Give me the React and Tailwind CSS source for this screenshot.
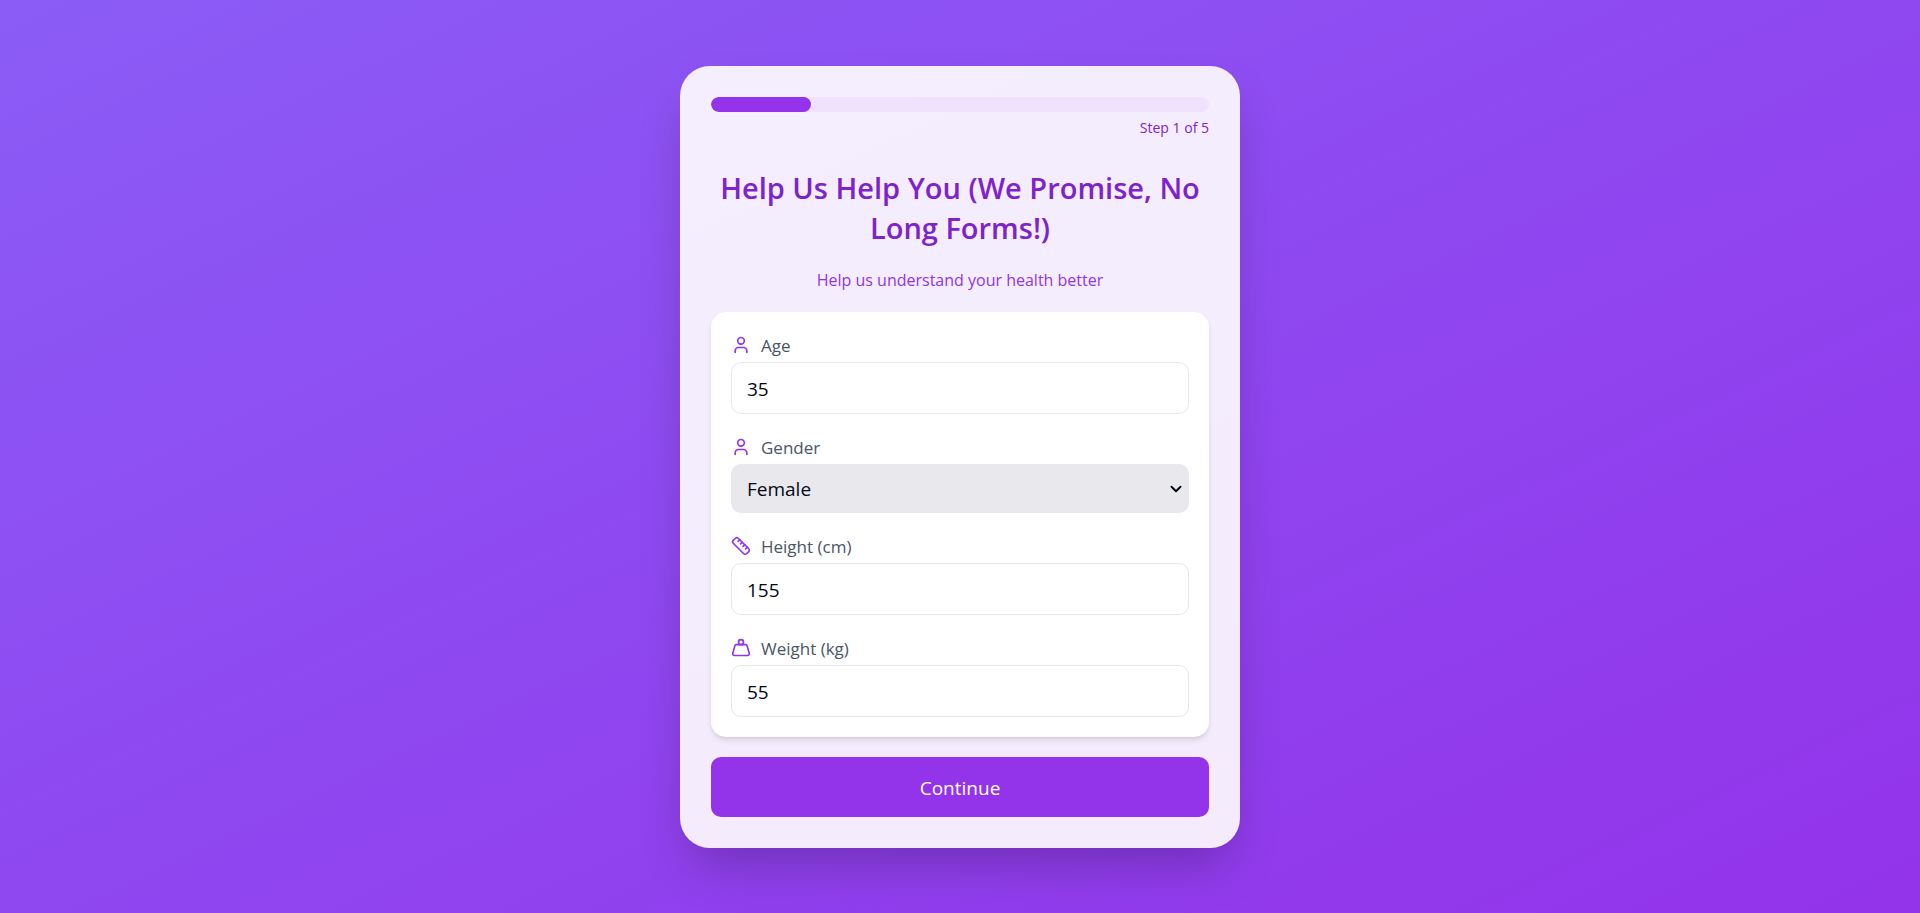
import { ChevronDown, Ruler, User, Weight } from "lucide-react";

const controlClass =
  "block w-full rounded-[10px] pt-[3px] text-[19px] text-[#020817] focus:outline-2 focus:outline-purple-500";

function Field({ id, label, icon: Icon, children }) {
  return (
    <div>
      <label
        htmlFor={id}
        className="mb-1 flex h-[26px] items-center gap-[10px] text-[17px] leading-[26px] text-gray-600"
      >
        <Icon size={20} className="shrink-0" color="#9333ea" aria-hidden="true" />
        <span className="pt-[2px]">{label}</span>
      </label>
      {children}
    </div>
  );
}

function NumberField({ id, label, icon, value }) {
  return (
    <Field id={id} label={label} icon={icon}>
      <input
        id={id}
        type="text"
        inputMode="numeric"
        defaultValue={value}
        className={`${controlClass} h-[52px] border border-[#e5e7eb] bg-white px-[15px]`}
      />
    </Field>
  );
}

export default function App() {
  return (
    <main className="flex min-h-screen items-center justify-center bg-[linear-gradient(to_bottom_right,#8b5cf6,#9333ea)] p-4 font-['Open_Sans','Noto_Sans',sans-serif]">
      <form
        className="w-full max-w-[560px] rounded-[30px] bg-white/90 p-[31px] shadow-[0_25px_50px_-12px_rgba(0,0,0,0.25)]"
        onSubmit={(event) => event.preventDefault()}
      >
        <div className="h-[15px] overflow-hidden rounded-full bg-[#f0e1ff]">
          <div className="h-full w-1/5 rounded-full bg-[#9333ea]" />
        </div>
        <p className="mt-1 text-right text-[14px] leading-6 text-[#7e22ce]">Step 1 of 5</p>

        <h1 className="mt-7 text-center text-[29px] leading-10 font-semibold text-[#7e22ce]">
          Help Us Help You (We Promise, No Long Forms!)
        </h1>
        <p className="mt-[18px] mb-[18px] text-center text-[16px] leading-7 text-[#9333ea]">
          Help us understand your health better
        </p>

        <div className="flex flex-col gap-5 rounded-[15px] bg-white p-5 shadow-[0_4px_6px_-1px_rgba(0,0,0,0.1),0_2px_4px_-2px_rgba(0,0,0,0.1)]">
          <NumberField id="age" label="Age" icon={User} value="35" />
          <Field id="gender" label="Gender" icon={User}>
            <div className="relative">
              <select
                id="gender"
                defaultValue="Female"
                className={`${controlClass} h-[49px] appearance-none bg-[#e9e9ed] px-4`}
              >
                <option>Female</option>
                <option>Male</option>
                <option>Other</option>
              </select>
              <ChevronDown
                size={18}
                strokeWidth={2.5}
                color="#020817"
                aria-hidden="true"
                className="pointer-events-none absolute top-4 right-1"
              />
            </div>
          </Field>
          <NumberField id="height" label="Height (cm)" icon={Ruler} value="155" />
          <NumberField id="weight" label="Weight (kg)" icon={Weight} value="55" />
        </div>

        <button
          type="submit"
          className="mt-5 h-[60px] w-full rounded-[10px] bg-[#9333ea] pt-1 text-[19px] text-white"
        >
          Continue
        </button>
      </form>
    </main>
  );
}
